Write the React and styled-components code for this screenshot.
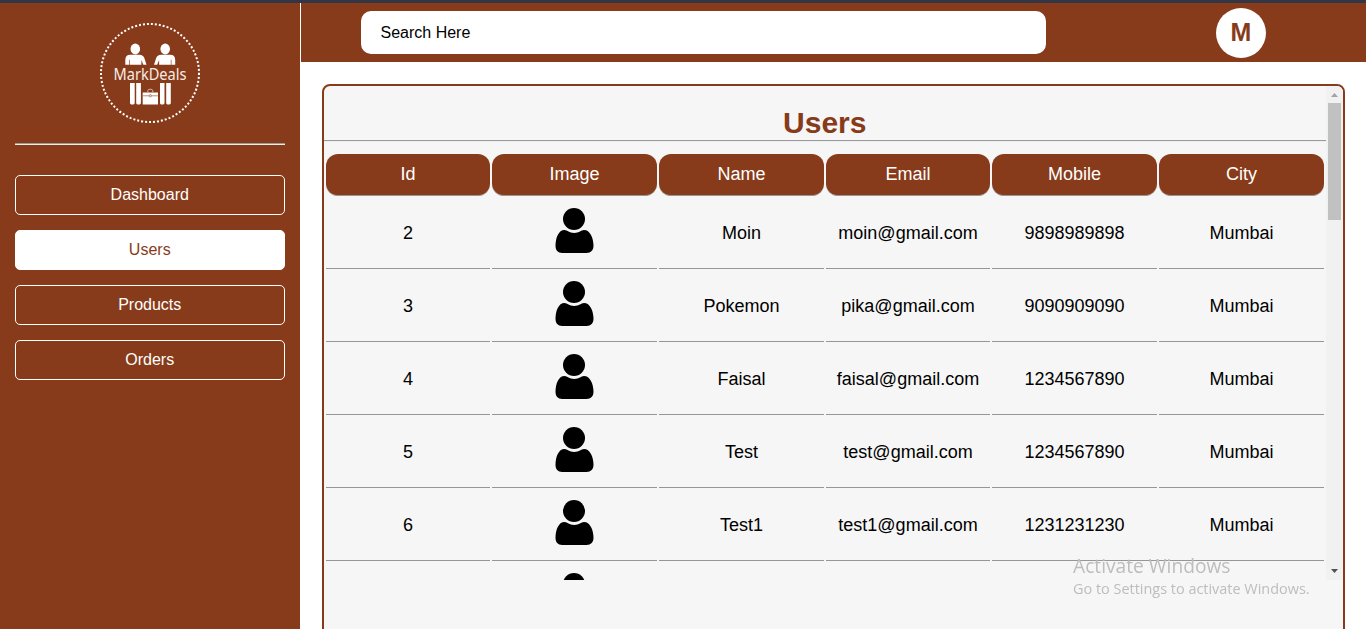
import React from "react";
import styled, { createGlobalStyle } from "styled-components";

const BROWN = "#873b1a";

const GlobalStyle = createGlobalStyle`
  * { box-sizing: border-box; }
  body {
    margin: 0;
    background: #fff;
    color: #000;
    font-family: "Liberation Sans", Arial, sans-serif;
    overflow: hidden;
  }
`;

const Page = styled.div`
  height: 100vh;
  display: flex;
  flex-direction: column;
  border-top: 3px solid #333645;
  overflow: hidden;
`;

const Columns = styled.div`
  flex: 1;
  min-height: 0;
  display: flex;
`;

const Sidebar = styled.aside`
  width: 301px;
  flex: none;
  padding: 20px 15px 0;
  background: ${BROWN};
  border-right: 1px solid #fff;
`;

const LogoSvg = styled.svg`
  display: block;
  width: 100px;
  height: 100px;
  margin: 0 auto;
`;

const LogoText = styled.text`
  font-family: "Noto Sans", "Open Sans", sans-serif;
  font-size: 16.5px;
  fill: #f6ebe5;
`;

const Divider = styled.hr`
  height: 2px;
  margin: ${(p) => p.$margin};
  border: 0;
  border-top: 1px solid ${(p) => p.$top};
  border-bottom: 1px solid ${(p) => p.$bottom};
`;

const Nav = styled.nav`
  display: flex;
  flex-direction: column;
  gap: 15px;
`;

const NavButton = styled.button`
  height: 40px;
  padding: 0 0.5px 0 0;
  border: 1px solid #fff;
  border-radius: 5px;
  font: 16px "Liberation Sans", Arial, sans-serif;
  background: ${(p) => (p.$active ? "#fff" : "transparent")};
  color: ${(p) => (p.$active ? BROWN : "#fff")};
`;

const Main = styled.main`
  flex: 1;
  min-width: 0;
  display: flex;
  flex-direction: column;
`;

const Header = styled.header`
  height: 59px;
  flex: none;
  display: flex;
  align-items: center;
  justify-content: space-between;
  padding: 0 100px 0 60px;
  background: ${BROWN};
`;

const SearchInput = styled.input`
  width: 685px;
  height: 43px;
  padding: 0 19.5px;
  border: 0;
  border-radius: 10px;
  background: #fff;
  font: 16px "Liberation Sans", Arial, sans-serif;
  &::placeholder { color: #000; opacity: 1; }
`;

const Avatar = styled.div`
  width: 50px;
  height: 50px;
  margin-top: 1px;
  padding-bottom: 1px;
  display: flex;
  align-items: center;
  justify-content: center;
  border-radius: 50%;
  background: #fff;
  color: ${BROWN};
  font-size: 25px;
  font-weight: 700;
`;

const Panel = styled.section`
  height: 600px;
  flex: none;
  margin: 22px 21px 0;
  border: 2px solid ${BROWN};
  border-radius: 8px;
  background: #f6f6f6;
`;

const ScrollArea = styled.div`
  height: 494px;
  display: flex;
  overflow: hidden;
  border-top-right-radius: 6px;
`;

const ScrollContent = styled.div`
  flex: 1;
  min-width: 0;
`;

const Scrollbar = styled.div`
  width: 17px;
  flex: none;
  display: flex;
  flex-direction: column;
  align-items: center;
  background: #f1f1f1;
`;

const ScrollArrow = styled.svg`
  display: block;
  width: 17px;
  height: 17px;
  flex: none;
`;

const ScrollThumb = styled.div`
  width: 13px;
  height: 117px;
  margin-bottom: auto;
  background: #c1c1c1;
`;

const Title = styled.h1`
  margin: 0;
  padding: 19px 0.5px 0 0;
  height: 54px;
  line-height: 35px;
  font-size: 30px;
  text-align: center;
  color: ${BROWN};
`;

const Table = styled.table`
  width: 100%;
  table-layout: fixed;
  border-collapse: separate;
  border-spacing: 2px;
  text-align: center;
  font-size: 18px;
`;

const Column = styled.col`
  width: ${(p) => p.$width}px;
`;

const HeadCell = styled.th`
  height: 42px;
  padding: 0;
  border-bottom: 1px solid #969696;
  border-radius: 12px;
  background: ${BROWN};
  color: #fff;
  font-weight: 400;
`;

const Cell = styled.td`
  height: 71px;
  padding: 1px 0 0;
  border-bottom: 1px solid #969696;
`;

const UserGlyph = styled.svg`
  display: block;
  width: 39px;
  height: 45px;
  margin: 0 auto 7px;
`;

const Watermark = styled.div`
  position: fixed;
  left: 1073px;
  top: 554px;
  color: #bdbdbd;
  font-family: "Open Sans", "Noto Sans", sans-serif;
  white-space: nowrap;
  pointer-events: none;
`;

const WatermarkTitle = styled.div`
  font-size: 19.2px;
  line-height: 24px;
`;

const WatermarkLine = styled.div`
  font-size: 14.45px;
  line-height: 22px;
`;

function Logo() {
  return (
    <LogoSvg viewBox="0 0 100 100" fill="#fff">
      <circle cx="50" cy="50" r="49" fill="none" stroke="#fff" strokeWidth="2" strokeDasharray="2 1.99" />
      {[35.3, 65.2].map((x, i) => (
        <g key={x} transform={`translate(${x} 0)${i ? " scale(-1 1)" : ""}`}>
          <ellipse cx="0" cy="26" rx="4.8" ry="5.4" />
          <path d="M-10 41.700V37q0-5.200 5-5.200h9q4 0 5.200 3.700l2 6.200h-3.200l-1.900-4.700v4.700h-11.700v-5h-.6v5z" />
        </g>
      ))}
      <LogoText x="13.5" y="57" textLength="73" lengthAdjust="spacingAndGlyphs">MarkDeals</LogoText>
      <path d="M30 60h4.700v20q0 1.400-1.400 1.400h-2q-1.300 0-1.300-1.400zM36.200 60h4.700v20q0 1.400-1.400 1.400h-2q-1.300 0-1.300-1.400zM60 60h4.500v20q0 1.400-1.400 1.400h-1.800q-1.300 0-1.300-1.400zM66.200 60h4.600v20q0 1.400-1.400 1.400h-1.900q-1.300 0-1.300-1.400z" />
      <path d="M42.700 69.500h15.300v12h-15.300z" />
      <path d="M47.800 69v-1.300q0-1.500 2.500-1.500t2.500 1.500v1.300" fill="none" stroke="#d9b9a9" strokeWidth="1" />
      <path d="M42.700 72.800h15.300" stroke="#bd8e78" strokeWidth="1" />
      <circle cx="50.3" cy="72.8" r="1.3" fill="#dcc3b7" stroke="#a06747" strokeWidth=".5" />
    </LogoSvg>
  );
}

function UserIcon() {
  return (
    <UserGlyph viewBox="0 0 39 45">
      <circle cx="19" cy="11" r="11" />
      <path d="M9.500 22C12.500 22 14 25 19.200 25s6.800-3 9.800-3C35 22 38.500 30 38.500 37.500c0 4.700-2.500 7.500-7 7.500H7.300C2.800 45 .5 42.200.5 37.500.5 30 3.500 22 9.500 22z" />
    </UserGlyph>
  );
}

const navItems = ["Dashboard", "Users", "Products", "Orders"];
const headings = ["Id", "Image", "Name", "Email", "Mobile", "City"];
const columnWidths = [164, 165, 165, 164, 165, 165];
const users = [
  { id: 2, name: "Moin", email: "moin@gmail.com", mobile: "9898989898", city: "Mumbai" },
  { id: 3, name: "Pokemon", email: "pika@gmail.com", mobile: "9090909090", city: "Mumbai" },
  { id: 4, name: "Faisal", email: "faisal@gmail.com", mobile: "1234567890", city: "Mumbai" },
  { id: 5, name: "Test", email: "test@gmail.com", mobile: "1234567890", city: "Mumbai" },
  { id: 6, name: "Test1", email: "test1@gmail.com", mobile: "1231231230", city: "Mumbai" },
  { id: "" },
];

export default function App() {
  return (
    <Page>
      <GlobalStyle />
      <Columns>
        <Sidebar>
          <Logo />
          <Divider $margin="20px 0 30px" $top="#9a9a9a" $bottom="#eeeeee" />
          <Nav>
            {navItems.map((item) => (
              <NavButton key={item} $active={item === "Users"}>{item}</NavButton>
            ))}
          </Nav>
        </Sidebar>
        <Main>
          <Header>
            <SearchInput placeholder="Search Here" />
            <Avatar>M</Avatar>
          </Header>
          <Panel>
            <ScrollArea>
              <ScrollContent>
                <Title>Users</Title>
                <Divider $margin="0 0 10px" $top="#9a9a9a" $bottom="#eeeeee" />
                <Table>
                  <colgroup>
                    {columnWidths.map((w, i) => <Column key={i} $width={w} />)}
                  </colgroup>
                  <thead>
                    <tr>{headings.map((h) => <HeadCell key={h}>{h}</HeadCell>)}</tr>
                  </thead>
                  <tbody>
                    {users.map((u) => (
                      <tr key={u.id}>
                        <Cell>{u.id}</Cell>
                        <Cell><UserIcon /></Cell>
                        <Cell>{u.name}</Cell>
                        <Cell>{u.email}</Cell>
                        <Cell>{u.mobile}</Cell>
                        <Cell>{u.city}</Cell>
                      </tr>
                    ))}
                  </tbody>
                </Table>
              </ScrollContent>
              <Scrollbar>
                <ScrollArrow viewBox="0 0 17 17"><path d="M5 11h7L8.500 7z" fill="#a3a3a3" /></ScrollArrow>
                <ScrollThumb />
                <ScrollArrow viewBox="0 0 17 17"><path d="M5 6h7L8.500 10z" fill="#505050" /></ScrollArrow>
              </Scrollbar>
            </ScrollArea>
          </Panel>
        </Main>
      </Columns>
      <Watermark>
        <WatermarkTitle>Activate Windows</WatermarkTitle>
        <WatermarkLine>Go to Settings to activate Windows.</WatermarkLine>
      </Watermark>
    </Page>
  );
}
